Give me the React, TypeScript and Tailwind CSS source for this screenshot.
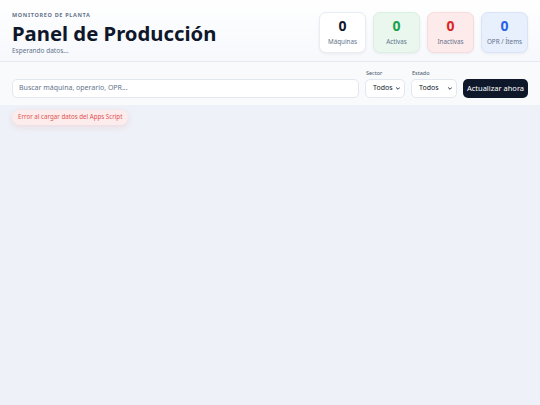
import React from 'react'

const stats = [
  { value: 0, label: 'Máquinas', box: 'bg-white border-[#e8ecf3]', num: 'text-[#0f172a]' },
  { value: 0, label: 'Activas', box: 'bg-[#e9f7ef] border-[#dcefe3]', num: 'text-[#16a34a]' },
  { value: 0, label: 'Inactivas', box: 'bg-[#fdeaea] border-[#f6dcdc]', num: 'text-[#dc2626]' },
  { value: 0, label: 'OPR / Ítems', box: 'bg-[#e8effd] border-[#dbe4f7]', num: 'text-[#2563eb]' },
]

const Select = ({ label, width }: { label: string; width: string }) => (
  <div className="flex flex-col gap-[3px]">
    <span className="text-[5.5px] text-[#475569] pl-[1px] leading-none">{label}</span>
    <div className={`${width} h-[19px] bg-white border border-[#e2e8f0] rounded-[5px] flex items-center justify-between pl-[7px] pr-[4px]`}>
      <span className="text-[7px] text-[#0f172a]">Todos</span>
      <svg width="4" height="3" viewBox="0 0 10 6" fill="none">
        <path d="M1 1l4 4 4-4" stroke="#0f172a" strokeWidth="2.2" strokeLinecap="round" strokeLinejoin="round" />
      </svg>
    </div>
  </div>
)

export default function App() {
  return (
    <div className="w-[540px] h-[405px] bg-[#eef1f8] overflow-hidden" style={{ fontFamily: '"Noto Sans", sans-serif' }}>
      <header className="h-[62px] bg-gradient-to-b from-white to-[#f6f8fc] border-b border-[#e3e8f1] flex items-start justify-between px-[12px]">
        <div className="pt-[13px] flex flex-col">
          <p className="text-[5.5px] font-bold tracking-[0.12em] text-[#64748b] leading-none">MONITOREO DE PLANTA</p>
          <h1 className="text-[20.3px] font-bold text-[#0f172a] leading-[28px]">Panel de Producción</h1>
          <p className="text-[6.5px] text-[#64748b] leading-[7px]">Esperando datos...</p>
        </div>
        <div className="flex gap-[7px] pt-[12px]">
          {stats.map((s) => (
            <div key={s.label} className={`w-[47px] h-[41px] rounded-[7px] border ${s.box} flex flex-col items-center justify-center shadow-[0_1px_3px_rgba(15,23,42,0.06)]`}>
              <span className={`text-[14px] font-bold leading-none ${s.num}`}>{s.value}</span>
              <span className="text-[6.3px] text-[#64748b] leading-none mt-[6px]">{s.label}</span>
            </div>
          ))}
        </div>
      </header>
      <div className="h-[43px] bg-[#f8fafc] flex items-end gap-[6px] px-[12px] pb-[7px]">
        <div className="flex-1 h-[19px] bg-white border border-[#e2e8f0] rounded-[5px] flex items-center px-[6px]">
          <span className="text-[7px] text-[#64748b]">Buscar máquina, operario, OPR...</span>
        </div>
        <Select label="Sector" width="w-[40px]" />
        <Select label="Estado" width="w-[46px]" />
        <button className="w-[65px] h-[19px] bg-[#0f172a] text-white rounded-[5px] text-[7.5px] flex items-center justify-center">
          Actualizar ahora
        </button>
      </div>
      <div className="flex px-[12px] pt-[5px]">
        <div className="flex items-center h-[15px] px-[6px] rounded-full bg-[#fdecec] text-[#e05252] text-[6.2px] leading-none shadow-[0_2px_6px_rgba(220,38,38,0.12)]">
          Error al cargar datos del Apps Script
        </div>
      </div>
    </div>
  )
}
